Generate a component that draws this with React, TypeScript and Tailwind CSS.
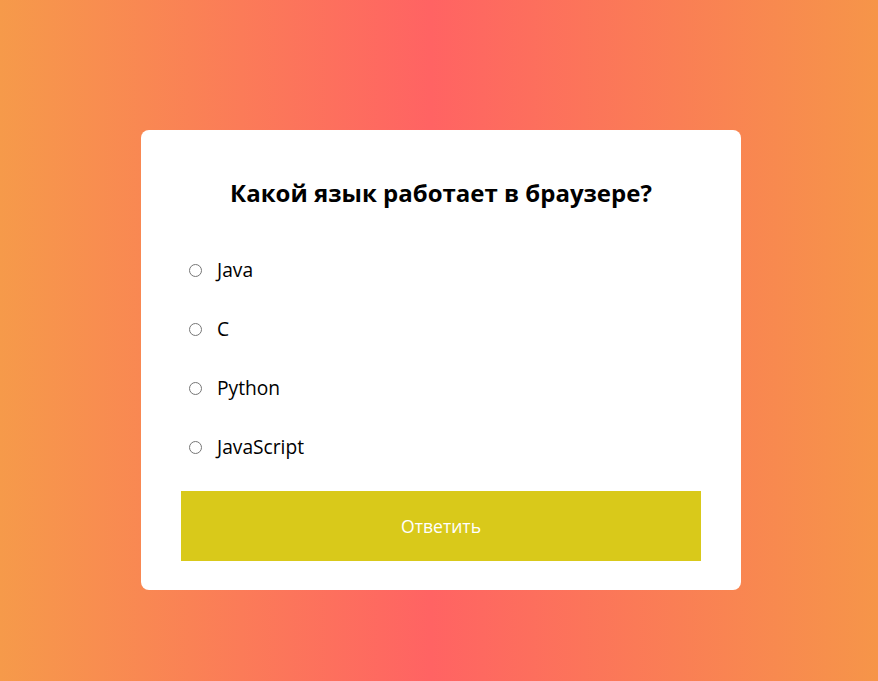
export default function App() {
  const options = ["Java", "C", "Python", "JavaScript"];

  return (
    <div
      className="min-h-[681px] w-full bg-[linear-gradient(to_right,#f69a4a_0%,#ff6363_49%,#f69549_100%)] pt-[130px]"
      style={{ fontFamily: '"Open Sans", sans-serif' }}
    >
      <div className="ml-[141px] w-[600px] rounded-lg bg-white px-10 pt-[28px] pb-[29px]">
        <h2 className="flex h-[70px] items-center justify-center text-[24px] font-bold text-black">
          Какой язык работает в браузере?
        </h2>
        <ul className="mt-[13px]">
          {options.map((opt, i) => (
            <li key={opt} className="flex h-[59px] items-center">
              <input
                type="radio"
                name="answer"
                id={"a" + i}
                className="ml-2 mr-[15px] h-[13px] w-[13px]"
              />
              <label htmlFor={"a" + i} className="text-[19.2px] text-black">
                {opt}
              </label>
            </li>
          ))}
        </ul>
        <button className="mt-[14px] h-[70px] w-full bg-[#d9c91a] text-[17.6px] text-white">
          Ответить
        </button>
      </div>
    </div>
  );
}
